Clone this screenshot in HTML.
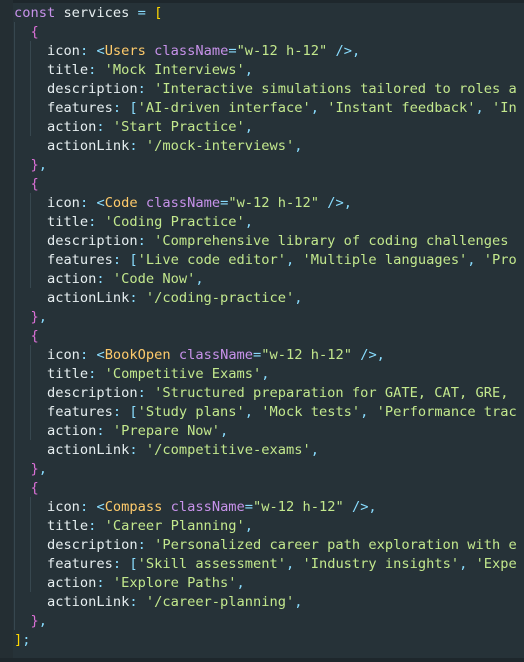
<!DOCTYPE html>
<html><head><style>
body{margin:0;width:524px;height:662px;background:#263238;overflow:hidden;position:relative}
.gut{position:absolute;left:0;top:0;width:13px;height:662px;background:#242e33}
.top{position:absolute;left:13px;top:0;right:0;height:3px;background:#1e272c}
.bot{position:absolute;left:0;bottom:0;right:0;height:4px;background:#1e272c}
.g{position:absolute;width:1px;background:#37474f}
pre{position:absolute;left:14px;top:4px;margin:0;font-family:"DejaVu Sans Mono","Liberation Mono",monospace;font-size:13.7px;line-height:19px;color:#e6eef0;white-space:pre}
.k{color:#c792ea}.p{color:#89ddff}.s{color:#c3e88d}.t{color:#ffcb6b}.y{color:#ffd700}.m{color:#da70d6}.a{color:#c792ea}
</style></head><body>
<div class="gut"></div><div class="top"></div><div class="bot"></div>
<div class="g" style="left:14px;top:22px;height:608px"></div>
<div class="g" style="left:30px;top:41px;height:95px"></div>
<div class="g" style="left:30px;top:193px;height:95px"></div>
<div class="g" style="left:30px;top:345px;height:95px"></div>
<div class="g" style="left:30px;top:497px;height:95px"></div>
<pre><span class="k">const</span> services <span class="p">=</span> <span class="y">[</span>
  <span class="m">{</span>
    icon<span class="p">:</span> <span class="p">&lt;</span><span class="t">Users</span> <span class="a">className</span><span class="p">=</span><span class="s">"w-12 h-12"</span> <span class="p">/&gt;,</span>
    title<span class="p">:</span> <span class="s">'Mock Interviews'</span><span class="p">,</span>
    description<span class="p">:</span> <span class="s">'Interactive simulations tailored to roles a</span>
    features<span class="p">:</span> <span class="p">[</span><span class="s">'AI-driven interface'</span><span class="p">,</span> <span class="s">'Instant feedback'</span><span class="p">,</span> <span class="s">'In</span>
    action<span class="p">:</span> <span class="s">'Start Practice'</span><span class="p">,</span>
    actionLink<span class="p">:</span> <span class="s">'/mock-interviews'</span><span class="p">,</span>
  <span class="m">}</span><span class="p">,</span>
  <span class="m">{</span>
    icon<span class="p">:</span> <span class="p">&lt;</span><span class="t">Code</span> <span class="a">className</span><span class="p">=</span><span class="s">"w-12 h-12"</span> <span class="p">/&gt;,</span>
    title<span class="p">:</span> <span class="s">'Coding Practice'</span><span class="p">,</span>
    description<span class="p">:</span> <span class="s">'Comprehensive library of coding challenges </span>
    features<span class="p">:</span> <span class="p">[</span><span class="s">'Live code editor'</span><span class="p">,</span> <span class="s">'Multiple languages'</span><span class="p">,</span> <span class="s">'Pro</span>
    action<span class="p">:</span> <span class="s">'Code Now'</span><span class="p">,</span>
    actionLink<span class="p">:</span> <span class="s">'/coding-practice'</span><span class="p">,</span>
  <span class="m">}</span><span class="p">,</span>
  <span class="m">{</span>
    icon<span class="p">:</span> <span class="p">&lt;</span><span class="t">BookOpen</span> <span class="a">className</span><span class="p">=</span><span class="s">"w-12 h-12"</span> <span class="p">/&gt;,</span>
    title<span class="p">:</span> <span class="s">'Competitive Exams'</span><span class="p">,</span>
    description<span class="p">:</span> <span class="s">'Structured preparation for GATE, CAT, GRE, </span>
    features<span class="p">:</span> <span class="p">[</span><span class="s">'Study plans'</span><span class="p">,</span> <span class="s">'Mock tests'</span><span class="p">,</span> <span class="s">'Performance trac</span>
    action<span class="p">:</span> <span class="s">'Prepare Now'</span><span class="p">,</span>
    actionLink<span class="p">:</span> <span class="s">'/competitive-exams'</span><span class="p">,</span>
  <span class="m">}</span><span class="p">,</span>
  <span class="m">{</span>
    icon<span class="p">:</span> <span class="p">&lt;</span><span class="t">Compass</span> <span class="a">className</span><span class="p">=</span><span class="s">"w-12 h-12"</span> <span class="p">/&gt;,</span>
    title<span class="p">:</span> <span class="s">'Career Planning'</span><span class="p">,</span>
    description<span class="p">:</span> <span class="s">'Personalized career path exploration with e</span>
    features<span class="p">:</span> <span class="p">[</span><span class="s">'Skill assessment'</span><span class="p">,</span> <span class="s">'Industry insights'</span><span class="p">,</span> <span class="s">'Expe</span>
    action<span class="p">:</span> <span class="s">'Explore Paths'</span><span class="p">,</span>
    actionLink<span class="p">:</span> <span class="s">'/career-planning'</span><span class="p">,</span>
  <span class="m">}</span><span class="p">,</span>
<span class="y">]</span><span class="p">;</span></pre>
</body></html>
